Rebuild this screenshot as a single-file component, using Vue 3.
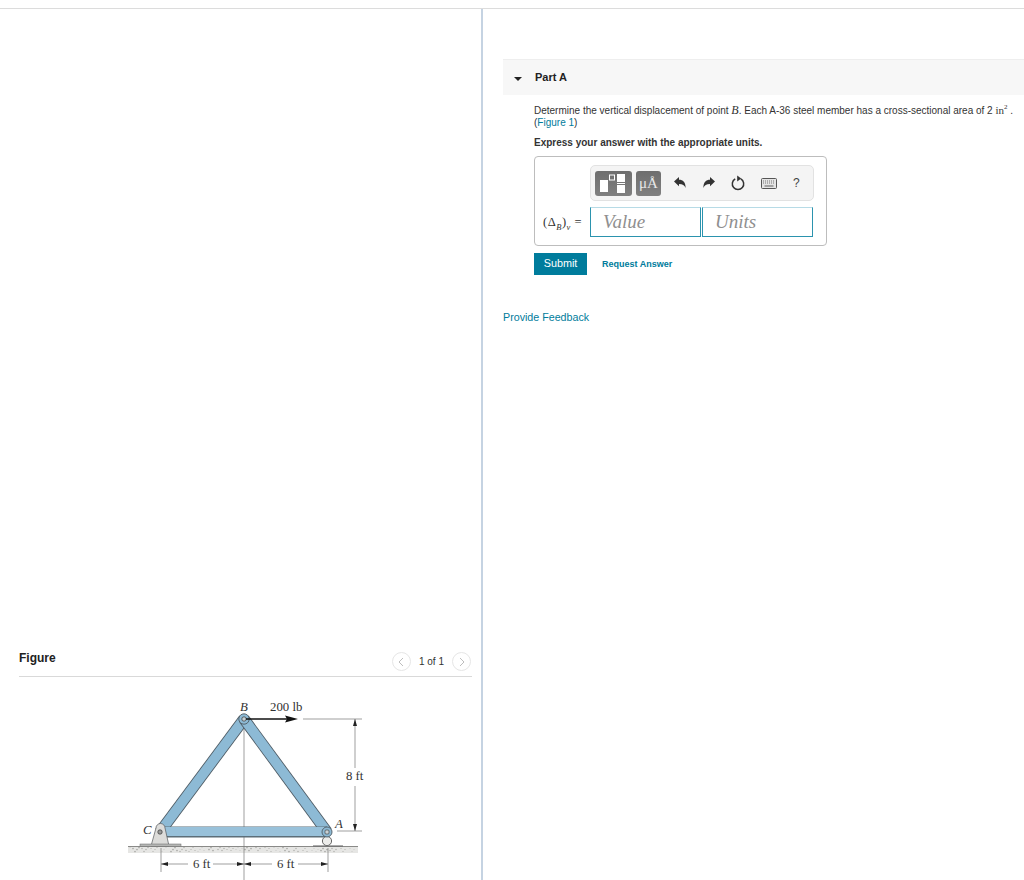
<template>
  <div class="page">
    <div class="columns">
      <section class="figure-col">
        <header class="figure-head">
          <h2>Figure</h2>
          <div class="pager">
            <span class="pager-btn">
              <svg width="8" height="10" viewBox="0 0 8 10"><path d="M6 1 2 5l4 4" /></svg>
            </span>
            <span class="pager-text">1 of 1</span>
            <span class="pager-btn">
              <svg width="8" height="10" viewBox="0 0 8 10"><path d="M2 1l4 4-4 4" /></svg>
            </span>
          </div>
        </header>
        <svg class="truss" width="250" height="190" viewBox="120 690 250 190">
          <!-- ground -->
          <rect x="128" y="846" width="230" height="7" fill="#e6e6e4" />
          <circle v-for="(d, i) in groundDots" :key="i" :cx="d.x" :cy="d.y" :r="d.r" fill="#a9a9a6" />
          <line x1="128" y1="846.5" x2="358" y2="846.5" stroke="#8a8a88" />

          <!-- dimension lines -->
          <g class="dim">
            <line x1="244" y1="728" x2="244" y2="880" />
            <line x1="161" y1="848" x2="161" y2="872" />
            <line x1="328" y1="848" x2="328" y2="872" />
            <line x1="161" y1="864" x2="188" y2="864" />
            <line x1="213" y1="864" x2="244" y2="864" />
            <line x1="244" y1="864" x2="272" y2="864" />
            <line x1="298" y1="864" x2="328" y2="864" />
            <line x1="303" y1="719" x2="362" y2="719" />
            <line x1="337" y1="831" x2="362" y2="831" />
            <line x1="355" y1="719" x2="355" y2="768" />
            <line x1="355" y1="786" x2="355" y2="831" />
          </g>
          <g fill="#222">
            <path d="M161 864l7-2v4zM244 864l-7-2v4zM244 864l7-2v4zM328 864l-7-2v4z" />
            <path d="M355 719l-2 7h4zM355 831l-2-7h4z" />
          </g>

          <!-- members -->
          <g class="member">
            <path d="M160 832 244 719" stroke="#4d5a63" stroke-width="11.500" />
            <path d="M160 832 244 719" stroke="#8dbad5" stroke-width="9.800" />
            <path d="M244 719 327 832" stroke="#4d5a63" stroke-width="11.500" />
            <path d="M244 719 327 832" stroke="#8dbad5" stroke-width="9.800" />
            <path d="M160 832H327" stroke="#5c6e79" stroke-width="11" />
            <path d="M160 831.5H327" stroke="#98c1da" stroke-width="9" />
          </g>

          <!-- supports and pins -->
          <path d="M151 846 156 828a4.500 4.500 0 0 1 9 0L169 846z" fill="#dcdcda" stroke="#55585a" stroke-width=".7" />
          <rect x="140" y="844" width="41" height="2.500" fill="#b5b6b4" stroke="#666" stroke-width=".5" />
          <circle cx="160" cy="832" r="2.200" fill="#9a9c9c" stroke="#333" stroke-width=".7" />
          <circle cx="327" cy="841" r="4.600" fill="#ececea" stroke="#444" stroke-width=".8" />
          <rect x="313" y="845.400" width="30" height="1.600" fill="#777" />
          <circle cx="327" cy="832" r="5" fill="#8dbad5" stroke="#4d5a63" stroke-width=".9" />
          <rect x="325" y="830" width="4" height="4" rx="1" fill="#c9d2d6" stroke="#333" stroke-width=".6" />
          <circle cx="244" cy="719" r="5.200" fill="#8dbad5" stroke="#4d5a63" stroke-width=".9" />
          <circle cx="244" cy="719" r="2.200" fill="#c9d2d6" stroke="#333" stroke-width=".7" />

          <!-- load -->
          <line x1="246" y1="719" x2="288" y2="719" stroke="#111" stroke-width="1.400" />
          <path d="M298 719 285 715.500 287 719 285 722.500z" fill="#111" />

          <!-- labels -->
          <text class="lbl italic" x="240" y="711">B</text>
          <text class="lbl" x="270" y="711">200 lb</text>
          <text class="lbl italic" x="143" y="834">C</text>
          <text class="lbl italic" x="335" y="828">A</text>
          <text class="lbl" x="346" y="780">8 ft</text>
          <text class="lbl" x="193" y="868">6 ft</text>
          <text class="lbl" x="277" y="868">6 ft</text>
        </svg>
      </section>

      <main class="part-col">
        <div class="part-bar">
          <span class="caret"></span>
          <h3>Part A</h3>
        </div>
        <div class="part-body">
          <p class="prompt">
            Determine the vertical displacement of point <i class="math math-b">B</i>. Each A-36 steel member has a cross-sectional area of 2 <span class="math">in<sup>2</sup></span> .
            <br />(<a class="link">Figure 1</a>)
          </p>
          <p class="instr">Express your answer with the appropriate units.</p>

          <div class="answer-box">
            <div class="toolbar">
              <button class="tool tool-template">
                <svg width="27" height="19" viewBox="0 0 27 19">
                  <rect x="0" y="6" width="8" height="12" fill="#fff" />
                  <rect x="9.500" y="1" width="5" height="5" fill="none" stroke="#fff" />
                  <rect x="17" y="0" width="8" height="8" fill="#fff" />
                  <rect x="17" y="9" width="8" height="1" fill="#fff" />
                  <rect x="17" y="11" width="8" height="8" fill="#fff" />
                </svg>
              </button>
              <button class="tool tool-units">μÅ</button>
              <span class="icons">
                <svg width="14" height="14" viewBox="0 0 14 14"><path d="M1 5.500 6 1v2.800c4 0 6.600 2.300 6.600 8.200-1-2.800-3-4-6.600-4V10.300z" fill="#333" /></svg>
                <svg width="14" height="14" viewBox="0 0 14 14"><path d="M13 5.500 8 1v2.800C4 3.800 1.400 6.100 1.400 12c1-2.800 3-4 6.600-4v2.300z" fill="#333" /></svg>
                <svg width="14" height="16" viewBox="0 0 14 16"><path d="M4.200 3.900a5.700 5.700 0 1 0 5.600 0" fill="none" stroke="#333" stroke-width="1.500" /><path d="M6.200 0.500v6l4-3z" fill="#333" /></svg>
                <svg class="kbd" width="16" height="11" viewBox="0 0 16 11">
                  <rect x=".5" y=".5" width="15" height="10" rx="1" fill="#e4e4e4" stroke="#555" />
                  <path d="M2 3h12M2 5h12" stroke="#777" stroke-dasharray="1 1" />
                  <path d="M3.500 8h9" stroke="#777" stroke-width="1.200" />
                </svg>
                <span class="help">?</span>
              </span>
            </div>
            <div class="inputs">
              <span class="eq-label">(Δ<sub>B</sub>)<sub class="nu">v</sub> =</span>
              <input class="field field-value" placeholder="Value" />
              <input class="field field-units" placeholder="Units" />
            </div>
          </div>

          <div class="actions">
            <button class="submit">Submit</button>
            <a class="request">Request Answer</a>
          </div>
        </div>
        <a class="feedback">Provide Feedback</a>
      </main>
    </div>
  </div>
</template>

<script setup>
// speckle for the ground strip under the truss
const groundDots = []
for (let i = 0; i < 90; i++) {
  groundDots.push({
    x: 130 + ((i * 47) % 226),
    y: 847.5 + ((i * 13) % 5),
    r: 0.4 + ((i * 7) % 4) * 0.15
  })
}
</script>

<style>
html, body {
  margin: 0;
  background: #fff;
}
</style>

<style scoped>
.page {
  height: 880px;
  overflow: hidden;
  padding-top: 8px;
  box-sizing: border-box;
  font-family: "Liberation Sans", Arial, sans-serif;
  color: #212121;
}

.columns {
  display: flex;
  height: 872px;
  border-top: 1px solid #dcdcdc;
}

.figure-col {
  width: 483px;
  flex: none;
  padding-top: 640px;
  box-sizing: border-box;
  border-right: 2px solid #c5d3e2;
  overflow: hidden;
}

.figure-head {
  display: flex;
  align-items: center;
  justify-content: space-between;
  height: 26px;
  margin: 0 9px 0 19px;
  padding-bottom: 1px;
  border-bottom: 1px solid #d9d9d9;
}

.figure-head h2 {
  margin: 0 0 8px;
  font-size: 12px;
  line-height: 14px;
  font-weight: bold;
}

.pager {
  display: flex;
  align-items: center;
  gap: 8px;
  margin-right: 1px;
  margin-bottom: 3px;
  align-self: flex-start;
  margin-top: 3px;
}

.pager-btn {
  display: flex;
  align-items: center;
  justify-content: center;
  width: 17px;
  height: 17px;
  border: 1px solid #e6e6e6;
  border-radius: 50%;
}

.pager-btn path {
  fill: none;
  stroke: #bdbdbd;
}

.pager-text {
  font-size: 10px;
  color: #333;
}

.truss {
  display: block;
  margin: 13px 0 0 120px;
}

.dim line {
  stroke: #777;
  stroke-width: 0.7;
}

.member path {
  fill: none;
}

.lbl {
  font-family: "Liberation Serif", serif;
  font-size: 12.800px;
  fill: #333;
}

.italic {
  font-style: italic;
}

.part-col {
  flex: 1;
  min-width: 0;
  padding: 50px 0 0 20px;
}

.part-bar {
  display: flex;
  align-items: center;
  height: 35px;
  background: #f7f7f7;
  border-top: 1px solid #eee;
}

.caret {
  width: 0;
  height: 0;
  margin: 2px 0 0 11px;
  border-left: 4px solid transparent;
  border-right: 4px solid transparent;
  border-top: 4px solid #222;
}

.part-bar h3 {
  margin: 0 0 2px 13px;
  font-size: 11px;
  font-weight: bold;
}

.part-body {
  padding: 9px 0 0 31px;
}

.prompt {
  margin: 0;
  font-size: 10px;
  line-height: 12px;
  color: #333;
}

.math {
  font-family: "Liberation Serif", serif;
  font-size: 11px;
}

.math-b {
  font-size: 12px;
}

.math sup {
  font-size: 7px;
  line-height: 0;
}

.link {
  color: #007c9c;
}

.instr {
  margin: 8px 0 0;
  font-size: 10px;
  line-height: 12px;
  font-weight: bold;
  color: #333;
}

.answer-box {
  width: 293px;
  height: 90px;
  margin-top: 7px;
  padding: 8px 13px 0 8px;
  box-sizing: border-box;
  border: 1px solid #bdbdbd;
  border-radius: 4px;
}

.toolbar {
  display: flex;
  align-items: center;
  width: 224px;
  height: 36px;
  margin-left: 47px;
  padding-left: 4px;
  box-sizing: border-box;
  background: #f4f4f4;
  border: 1px solid #e2e2e2;
  border-radius: 5px;
}

.tool {
  display: flex;
  align-items: center;
  justify-content: center;
  height: 25px;
  padding: 0;
  border: 0;
  border-radius: 3px;
  background: linear-gradient(#6e6e6e, #808080);
  color: #fff;
}

.tool-template {
  width: 37px;
}

.tool-units {
  width: 25px;
  margin-left: 4px;
  font-family: "Liberation Serif", serif;
  font-size: 15px;
  color: #e8e8e8;
}

.icons {
  display: flex;
  align-items: center;
  margin-left: 12px;
  gap: 15px;
}

.icons .kbd {
  margin-left: 1px;
}

.help {
  margin-left: 1px;
  font-size: 12px;
  color: #444;
}

.inputs {
  display: flex;
  align-items: center;
  margin-top: 6px;
}

.eq-label {
  width: 47px;
  flex: none;
  font-family: "Liberation Serif", serif;
  font-size: 12.500px;
  letter-spacing: 0.5px;
  color: #333;
  white-space: nowrap;
}

.eq-label sub {
  font-size: 8.500px;
  font-style: italic;
  line-height: 0;
}

.field {
  width: 111px;
  height: 30px;
  padding: 0 0 0 12px;
  box-sizing: border-box;
  border: 1px solid #2b93ae;
  border-top-color: #b7dbe6;
  border-radius: 0;
  outline: none;
  font-family: "Liberation Serif", serif;
  font-size: 19px;
  font-style: italic;
}

.field::placeholder {
  color: #8f8f8f;
  opacity: 1;
}

.field-units {
  margin-left: 1px;
}

.actions {
  display: flex;
  align-items: center;
  margin-top: 7px;
}

.submit {
  width: 53px;
  height: 22px;
  padding: 0 0 2px;
  border: 0;
  background: #007c9c;
  color: #fff;
  font-family: inherit;
  font-size: 10.800px;
}

.request {
  margin-left: 15px;
  font-size: 9px;
  font-weight: bold;
  color: #007c9c;
}

.feedback {
  display: block;
  margin-top: 36px;
  font-size: 10.700px;
  line-height: 13px;
  color: #007c9c;
}
</style>
